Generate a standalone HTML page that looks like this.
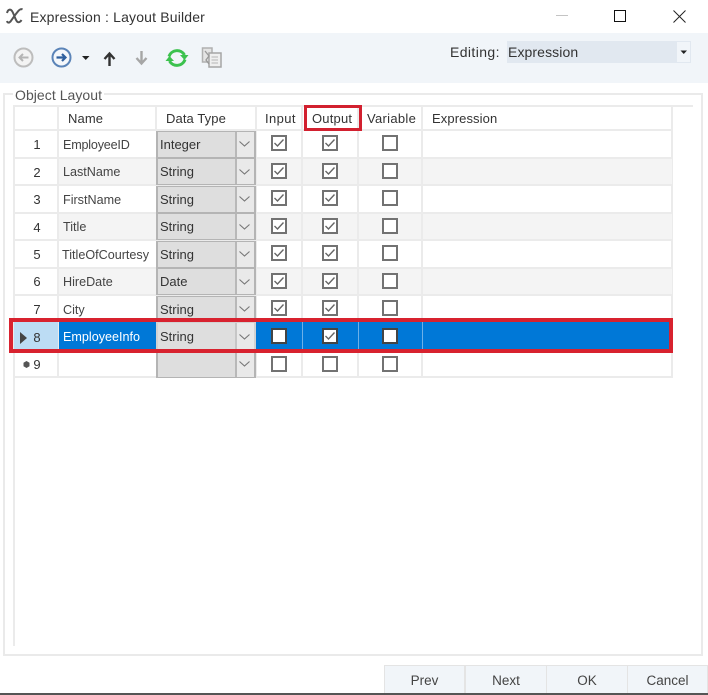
<!DOCTYPE html>
<html><head><meta charset="utf-8"><title>Expression : Layout Builder</title>
<style>
html,body{margin:0;padding:0;background:#fff}
#p{position:relative;width:708px;height:695px;overflow:hidden;background:#fff;font-family:"Liberation Sans",sans-serif;font-size:13px;color:#333;filter:blur(.35px)}
#p div{position:absolute;box-sizing:border-box}
#p svg{position:absolute;overflow:visible}
.t{white-space:nowrap;line-height:16px;height:16px}
.h{top:111px;font-size:13px;letter-spacing:.1px}
.hl{background:#ebebeb}
.alt{background:#f4f4f4;left:59px;width:613px;height:25px}
.combo{left:156px;width:100px;height:27px;background:#dedede;border:1px solid #b4b4b4;border-left-width:2px;border-right-width:2px}
.arr{left:235px;width:19px;height:25px;background:#e9e9e9;border-left:2px solid #b8b8b8}
.cb{width:16px;height:16px;border:2px solid #727272;background:#fff}
.n{width:20px;text-align:center;left:27px;font-size:13px;color:#333}
.nm{left:62px;color:#444;font-size:12.600px}
.ty{left:160px;color:#333;font-size:13px}
.btn{top:665px;height:28px;width:81px;background:#f1f5f9;border:1px solid #e4e4e4;border-bottom:0;text-align:center;line-height:29px;color:#444;font-size:13.500px}
</style></head><body><div id="p">

<!-- title bar -->
<svg style="left:6px;top:7px" width="18" height="18" viewBox="0 0 18 18"><path d="M1 6C2 2 4.500 2 6 4C8 7 9 12 11 14.500C12.500 16 14.500 15 15.500 13M16.500 2.500C15 1.500 13 3 11.500 5C9 8 7 11 4.500 14.500C3 16 1.500 16 1 14" fill="none" stroke="#555" stroke-width="2"/></svg>
<div class="t" style="left:30px;top:9px;font-size:14px;color:#333;letter-spacing:.17px">Expression : Layout Builder</div>
<div style="left:556px;top:15px;width:12px;height:1px;background:#c4c4c4"></div>
<div style="left:614px;top:10px;width:12px;height:12px;border:1px solid #111"></div>
<svg style="left:673px;top:10px" width="13" height="13" viewBox="0 0 13 13"><path d="M.5 .5L12.500 12.500M12.500 .5L.5 12.500" stroke="#222" stroke-width="1" fill="none"/></svg>

<!-- toolbar -->
<div style="left:0;top:33px;width:708px;height:50px;background:#f1f5f9"></div>
<svg style="left:13px;top:47px" width="21" height="21" viewBox="0 0 21 21"><circle cx="10.500" cy="10.500" r="9" fill="#f3f3f3" stroke="#bdbdbd" stroke-width="2"/><path d="M15.500 10.500H7M10 7L6.500 10.500L10 14" fill="none" stroke="#b5b5b5" stroke-width="2"/></svg>
<svg style="left:51px;top:47px" width="21" height="21" viewBox="0 0 21 21"><circle cx="10.500" cy="10.500" r="9" fill="#f4f7fb" stroke="#5b84b8" stroke-width="2"/><path d="M5.500 10.500H14M11 7L14.500 10.500L11 14" fill="none" stroke="#2f5f9e" stroke-width="2.200"/></svg>
<svg style="left:82px;top:56px" width="8" height="5" viewBox="0 0 8 5"><path d="M0 0H7.500L3.750 4Z" fill="#222"/></svg>
<svg style="left:103px;top:52px" width="13" height="14" viewBox="0 0 13 14"><path d="M6.500 14V3M1.500 7L6.500 1.500L11.500 7" fill="none" stroke="#333" stroke-width="2.400"/></svg>
<svg style="left:135px;top:51px" width="13" height="14" viewBox="0 0 13 14"><path d="M6.500 0V11M1.500 7L6.500 12.500L11.500 7" fill="none" stroke="#a6a6a6" stroke-width="2.400"/></svg>
<svg style="left:165px;top:46px" width="24" height="24" viewBox="0 0 24 24"><path d="M4 10.500A8.500 8.500 0 0 1 19.500 9M20 13.500A8.500 8.500 0 0 1 4.500 15" fill="none" stroke="#3cc24e" stroke-width="3"/><path d="M15 9H23.500L19.500 14ZM.5 15H9L4.500 10Z" fill="#3cc24e"/></svg>
<svg style="left:201px;top:47px" width="21" height="22" viewBox="0 0 21 22"><path d="M1.500 1H11V15H1.500Z" fill="#e4e4e4" stroke="#b0b0b0" stroke-width="1.500"/><path d="M8 6H20V20H8Z" fill="#efefef" stroke="#a5a5a5" stroke-width="1.500"/><path d="M10.500 10H17M10.500 13H17M10.500 16H17" stroke="#b5b5b5"/><path d="M4 4L8 9L5 13L8 17" fill="none" stroke="#999" stroke-width="1.300"/></svg>
<div class="t" style="left:450px;top:44px;font-size:14px;color:#333;letter-spacing:.4px">Editing:</div>
<div style="left:507px;top:41px;width:184px;height:22px;background:#e1e8f0"></div>
<div style="left:677px;top:42px;width:13px;height:20px;background:#f1f5f9"></div>
<div class="t" style="left:508px;top:44px;font-size:14px;color:#333;letter-spacing:.1px">Expression</div>
<svg style="left:680px;top:50px" width="8" height="5" viewBox="0 0 8 5"><path d="M.5 .5H7L3.750 4Z" fill="#222"/></svg>

<!-- group box -->
<div style="left:3px;top:93px;width:700px;height:563px;border:2px solid #eaeaea"></div>
<div class="t" style="left:13px;top:87px;background:#fff;padding:0 2px;font-size:14px;color:#555;letter-spacing:.05px">Object Layout</div>

<!-- grid lines -->
<div class="hl" style="left:13px;top:105px;width:680px;height:2px"></div>
<div class="hl" style="left:13px;top:106px;width:2px;height:540px"></div>
<div class="hl" style="left:671px;top:106px;width:2px;height:272px"></div>

<!-- alternating rows -->
<div class="alt" style="top:159px"></div>
<div class="alt" style="top:214px"></div>
<div class="alt" style="top:269px"></div>

<!-- horizontal lines -->
<div class="hl" style="left:14px;top:129px;width:658px;height:2px"></div>
<div class="hl" style="left:14px;top:157px;width:658px;height:2px"></div>
<div class="hl" style="left:14px;top:184px;width:658px;height:2px"></div>
<div class="hl" style="left:14px;top:212px;width:658px;height:2px"></div>
<div class="hl" style="left:14px;top:239px;width:658px;height:2px"></div>
<div class="hl" style="left:14px;top:267px;width:658px;height:2px"></div>
<div class="hl" style="left:14px;top:294px;width:658px;height:2px"></div>
<div class="hl" style="left:14px;top:350px;width:658px;height:2px"></div>
<div class="hl" style="left:14px;top:376px;width:658px;height:2px"></div>

<!-- vertical lines -->
<div class="hl" style="left:57px;top:106px;width:2px;height:272px"></div>
<div class="hl" style="left:155px;top:106px;width:2px;height:25px"></div>
<div class="hl" style="left:255px;top:106px;width:2px;height:272px"></div>
<div class="hl" style="left:301px;top:106px;width:2px;height:216px"></div>
<div class="hl" style="left:357px;top:106px;width:2px;height:216px"></div>
<div class="hl" style="left:421px;top:106px;width:2px;height:216px"></div>
<div class="hl" style="left:301px;top:350px;width:2px;height:28px"></div>
<div class="hl" style="left:357px;top:350px;width:2px;height:28px"></div>
<div class="hl" style="left:421px;top:350px;width:2px;height:28px"></div>

<!-- combos -->
<div class="combo" style="top:131px"></div><div class="arr" style="top:132px"></div>
<div class="combo" style="top:158px"></div><div class="arr" style="top:159px"></div>
<div class="combo" style="top:186px"></div><div class="arr" style="top:187px"></div>
<div class="combo" style="top:213px"></div><div class="arr" style="top:214px"></div>
<div class="combo" style="top:241px"></div><div class="arr" style="top:242px"></div>
<div class="combo" style="top:268px"></div><div class="arr" style="top:269px"></div>
<div class="combo" style="top:296px"></div><div class="arr" style="top:297px"></div>
<div class="combo" style="top:351px"></div><div class="arr" style="top:352px"></div>

<!-- selected row -->
<div style="left:14px;top:322px;width:44px;height:28px;background:#bcdcf4"></div>
<div style="left:59px;top:322px;width:613px;height:28px;background:#0078d7"></div>
<div class="combo" style="top:322px;height:28px;border-color:#d2d2d2"></div><div class="arr" style="top:323px;height:26px;border-left-color:#c6c6c6"></div>
<div style="left:302px;top:322px;width:1px;height:28px;background:#6db0e8"></div>
<div style="left:358px;top:322px;width:1px;height:28px;background:#6db0e8"></div>
<div style="left:422px;top:322px;width:1px;height:28px;background:#6db0e8"></div>

<!-- header text -->
<div class="t h" style="left:68px">Name</div>
<div class="t h" style="left:166px">Data Type</div>
<div class="t h" style="left:265px;letter-spacing:.4px">Input</div>
<div class="t h" style="left:312px;letter-spacing:.2px">Output</div>
<div class="t h" style="left:367px;letter-spacing:.3px">Variable</div>
<div class="t h" style="left:432px">Expression</div>

<!-- row numbers -->
<div class="t n" style="top:137px">1</div>
<div class="t n" style="top:165px">2</div>
<div class="t n" style="top:192px">3</div>
<div class="t n" style="top:220px">4</div>
<div class="t n" style="top:247px">5</div>
<div class="t n" style="top:274px">6</div>
<div class="t n" style="top:302px">7</div>
<div class="t n" style="top:330px">8</div>
<div class="t n" style="top:357px">9</div>
<svg style="left:20px;top:332px" width="7" height="12" viewBox="0 0 7 12"><path d="M0 0L7 6L0 12Z" fill="#444"/></svg>
<svg style="left:23px;top:361px" width="7" height="7" viewBox="0 0 7 7"><path d="M3.500 0L6.500 1.700V5.300L3.500 7L.5 5.300V1.700Z" fill="#555"/></svg>

<!-- names -->
<div class="t nm" style="top:137px;left:63px;letter-spacing:-.2px">EmployeeID</div>
<div class="t nm" style="top:164px;left:63px">LastName</div>
<div class="t nm" style="top:192px;left:63px">FirstName</div>
<div class="t nm" style="top:219px;left:63px">Title</div>
<div class="t nm" style="top:247px">TitleOfCourtesy</div>
<div class="t nm" style="top:274px;left:63px">HireDate</div>
<div class="t nm" style="top:302px;left:63px">City</div>
<div class="t nm" style="top:329px;left:63px;color:#fff">EmployeeInfo</div>

<!-- types -->
<div class="t ty" style="top:137px">Integer</div>
<div class="t ty" style="top:164px">String</div>
<div class="t ty" style="top:192px">String</div>
<div class="t ty" style="top:219px">String</div>
<div class="t ty" style="top:247px">String</div>
<div class="t ty" style="top:274px">Date</div>
<div class="t ty" style="top:302px">String</div>
<div class="t ty" style="top:329px">String</div>

<!-- combo chevrons -->
<svg style="left:239px;top:141px" width="11" height="6" viewBox="0 0 11 6"><path d="M.5 .5L5.500 5L10.500 .5" fill="none" stroke="#777" stroke-width="1.100"/></svg>
<svg style="left:239px;top:169px" width="11" height="6" viewBox="0 0 11 6"><path d="M.5 .5L5.500 5L10.500 .5" fill="none" stroke="#777" stroke-width="1.100"/></svg>
<svg style="left:239px;top:196px" width="11" height="6" viewBox="0 0 11 6"><path d="M.5 .5L5.500 5L10.500 .5" fill="none" stroke="#777" stroke-width="1.100"/></svg>
<svg style="left:239px;top:224px" width="11" height="6" viewBox="0 0 11 6"><path d="M.5 .5L5.500 5L10.500 .5" fill="none" stroke="#777" stroke-width="1.100"/></svg>
<svg style="left:239px;top:251px" width="11" height="6" viewBox="0 0 11 6"><path d="M.5 .5L5.500 5L10.500 .5" fill="none" stroke="#777" stroke-width="1.100"/></svg>
<svg style="left:239px;top:279px" width="11" height="6" viewBox="0 0 11 6"><path d="M.5 .5L5.500 5L10.500 .5" fill="none" stroke="#777" stroke-width="1.100"/></svg>
<svg style="left:239px;top:306px" width="11" height="6" viewBox="0 0 11 6"><path d="M.5 .5L5.500 5L10.500 .5" fill="none" stroke="#777" stroke-width="1.100"/></svg>
<svg style="left:239px;top:334px" width="11" height="6" viewBox="0 0 11 6"><path d="M.5 .5L5.500 5L10.500 .5" fill="none" stroke="#777" stroke-width="1.100"/></svg>
<svg style="left:239px;top:361px" width="11" height="6" viewBox="0 0 11 6"><path d="M.5 .5L5.500 5L10.500 .5" fill="none" stroke="#777" stroke-width="1.100"/></svg>

<!-- checkboxes -->
<div class="cb" style="left:271px;top:135px"></div><div class="cb" style="left:322px;top:135px"></div><div class="cb" style="left:382px;top:135px"></div>
<div class="cb" style="left:271px;top:163px"></div><div class="cb" style="left:322px;top:163px"></div><div class="cb" style="left:382px;top:163px"></div>
<div class="cb" style="left:271px;top:190px"></div><div class="cb" style="left:322px;top:190px"></div><div class="cb" style="left:382px;top:190px"></div>
<div class="cb" style="left:271px;top:218px"></div><div class="cb" style="left:322px;top:218px"></div><div class="cb" style="left:382px;top:218px"></div>
<div class="cb" style="left:271px;top:245px"></div><div class="cb" style="left:322px;top:245px"></div><div class="cb" style="left:382px;top:245px"></div>
<div class="cb" style="left:271px;top:273px"></div><div class="cb" style="left:322px;top:273px"></div><div class="cb" style="left:382px;top:273px"></div>
<div class="cb" style="left:271px;top:300px"></div><div class="cb" style="left:322px;top:300px"></div><div class="cb" style="left:382px;top:300px"></div>
<div class="cb" style="left:271px;top:328px;border-color:#444"></div><div class="cb" style="left:322px;top:328px;border-color:#444"></div><div class="cb" style="left:382px;top:328px;border-color:#444"></div>
<div class="cb" style="left:271px;top:356px"></div><div class="cb" style="left:322px;top:356px"></div><div class="cb" style="left:382px;top:356px"></div>

<!-- check marks -->
<svg style="left:0;top:0" width="708" height="695" viewBox="0 0 708 695"><g fill="none" stroke="#666" stroke-width="1.400">
<path d="M274.500 143L277.500 146L283.500 139.500M325.500 143L328.500 146L334.500 139.500"/>
<path d="M274.500 171L277.500 174L283.500 167.500M325.500 171L328.500 174L334.500 167.500"/>
<path d="M274.500 198L277.500 201L283.500 194.500M325.500 198L328.500 201L334.500 194.500"/>
<path d="M274.500 226L277.500 229L283.500 222.500M325.500 226L328.500 229L334.500 222.500"/>
<path d="M274.500 253L277.500 256L283.500 249.500M325.500 253L328.500 256L334.500 249.500"/>
<path d="M274.500 281L277.500 284L283.500 277.500M325.500 281L328.500 284L334.500 277.500"/>
<path d="M274.500 308L277.500 311L283.500 304.500M325.500 308L328.500 311L334.500 304.500"/>
<path d="M325.500 336L328.500 339L334.500 332.500"/>
</g></svg>

<!-- red annotations -->
<div style="left:9px;top:318px;width:664px;height:35px;border:4px solid #d8222f"></div>
<div style="left:304px;top:105px;width:58px;height:26px;border:3px solid #d2202f"></div>

<!-- bottom edge and buttons -->
<div style="left:0;top:693px;width:708px;height:2px;background:#555"></div>
<div class="btn" style="left:384px">Prev</div>
<div class="btn" style="left:465px;width:82px">Next</div>
<div class="btn" style="left:546px;width:82px">OK</div>
<div class="btn" style="left:627px">Cancel</div>

</div></body></html>
